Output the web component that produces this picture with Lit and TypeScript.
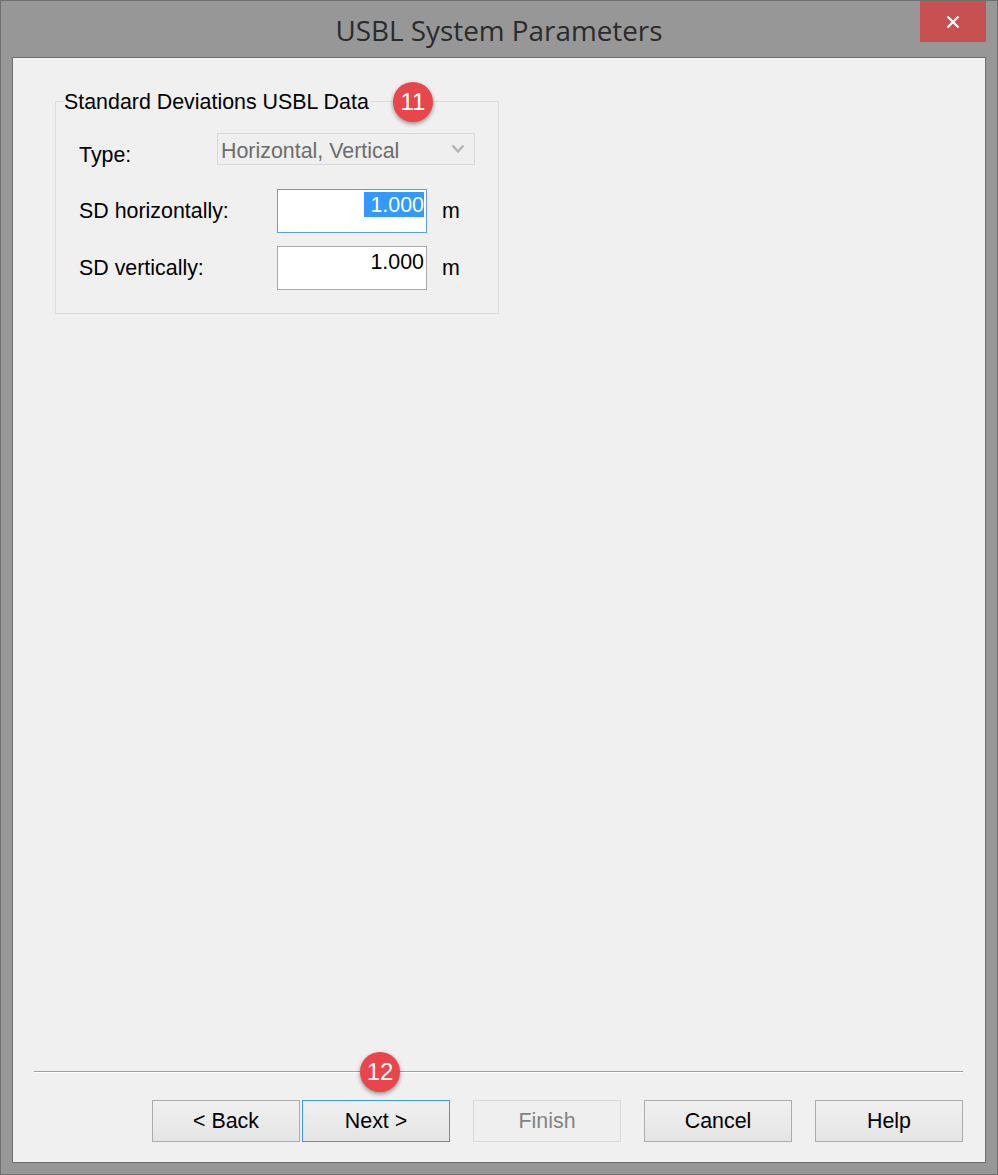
import { LitElement, html, css } from "lit";
import { customElement } from "lit/decorators.js";

@customElement("app-root")
export class AppRoot extends LitElement {
  static styles = css`
    :host { display: block; width: 998px; height: 1175px; font-family: "Liberation Sans", Arial, sans-serif; color: #000; }
    * { box-sizing: border-box; }
    .window { height: 1175px; display: flex; flex-direction: column; background: #979797; border: 1px solid #6f6f6f; }
    .titlebar { position: relative; height: 56px; flex: none; display: flex; align-items: center; justify-content: center; }
    .title { font-family: "Open Sans", "Noto Sans", sans-serif; font-size: 27.85px; color: #2b2b2b; line-height: 56px; position: relative; top: 1px; }
    .close { position: absolute; right: 11px; top: 0; width: 66px; height: 41px; background: #c75050; display: flex; align-items: center; justify-content: center; }
    .client { flex: 1; margin: 0 11px 11px; background: #f0f0f0; border: 1px solid #6f6f6f; display: flex; flex-direction: column; padding: 31px 22px 20px 21px; min-height: 0; }
    .group { position: relative; margin: 0 0 0 21px; width: 444px; height: 225px; border: 1px solid #dcdcdc; padding: 0 0 0 23px; min-width: 0; }
    legend { padding: 2px 1px 0 0; margin-left: -15px; font-size: 21.4px; line-height: 22px; height: 24px; white-space: nowrap; }
    .row { display: flex; align-items: flex-start; font-size: 21.4px; line-height: 24px; }
    .type { margin-top: 20px; height: 32px; }
    .type .lbl { width: 138px; padding-top: 10px; }
    .combo { width: 258px; height: 32px; border: 1px solid #d9d9d9; display: flex; align-items: center; justify-content: space-between; padding: 4px 9px 0 3px; color: #6d6d6d; background: #efefef; }
    .combo svg { display: block; margin-top: -4px; }
    .sd { height: 44px; }
    .sd1 { margin-top: 24px; }
    .sd2 { margin-top: 13px; }
    .sd .lbl { width: 198px; padding-top: 10px; }
    .input { width: 150px; height: 44px; background: #fff; border: 1px solid #ababab; display: flex; justify-content: flex-end; align-items: flex-start; padding: 2px 2px 0 0; }
    .input.focus { border-color: #5c9fe6; }
    .val { display: block; height: 25px; line-height: 27px; }
    .sel { width: 60px; background: #3399ff; color: #fff; text-align: right; }
    .unit { margin-left: 15px; padding-top: 10px; }
    .badge { position: absolute; width: 40px; height: 40px; border-radius: 50%; background: #e8464a; color: #fff; font-size: 24px; line-height: 40px; text-align: center; box-shadow: 0 2px 4px rgba(0,0,0,.4); }
    .b11 { left: 337px; top: -31px; }
    .b12 { left: 326px; top: -20px; }
    .spacer { flex: 1; }
    .sep { position: relative; height: 2px; background: #fff; margin-bottom: 27px; border-top: 1px solid #a0a0a0; }
    .buttons { display: flex; padding-left: 118px; }
    .btn { width: 148px; height: 42px; margin-left: 23px; border: 1px solid #acacac; background: linear-gradient(#f0f0f0, #e5e5e5); font-size: 21.4px; line-height: 40px; text-align: center; }
    .btn.back { margin-left: 0; }
    .btn.next { margin-left: 2px; border-color: #3c97ee; }
    .btn.off { border-color: #d9d9d9; background: #efefef; color: #838383; }
  `;

  render() {
    return html`
      <div class="window">
        <div class="titlebar">
          <div class="title">USBL System Parameters</div>
          <div class="close">
            <svg width="14" height="12" viewBox="0 0 14 12"><path d="M1.5 .5 L12.5 11.5 M12.5 .5 L1.5 11.5" stroke="#fff" stroke-width="2.2" fill="none"/></svg>
          </div>
        </div>
        <div class="client">
          <fieldset class="group">
            <legend>Standard Deviations USBL Data</legend>
            <div class="badge b11">11</div>
            <div class="row type">
              <div class="lbl">Type:</div>
              <div class="combo">
                <span>Horizontal, Vertical</span>
                <svg width="14" height="10" viewBox="0 0 14 10"><path d="M1.5 1.5 L7 7.5 L12.5 1.5" stroke="#b4b4b4" stroke-width="2.4" fill="none"/></svg>
              </div>
            </div>
            <div class="row sd sd1">
              <div class="lbl">SD horizontally:</div>
              <div class="input focus"><span class="val sel">1.000</span></div>
              <div class="unit">m</div>
            </div>
            <div class="row sd sd2">
              <div class="lbl">SD vertically:</div>
              <div class="input"><span class="val">1.000</span></div>
              <div class="unit">m</div>
            </div>
          </fieldset>
          <div class="spacer"></div>
          <div class="sep"><div class="badge b12">12</div></div>
          <div class="buttons">
            <div class="btn back">&lt; Back</div>
            <div class="btn next">Next &gt;</div>
            <div class="btn off">Finish</div>
            <div class="btn">Cancel</div>
            <div class="btn">Help</div>
          </div>
        </div>
      </div>
    `;
  }
}
